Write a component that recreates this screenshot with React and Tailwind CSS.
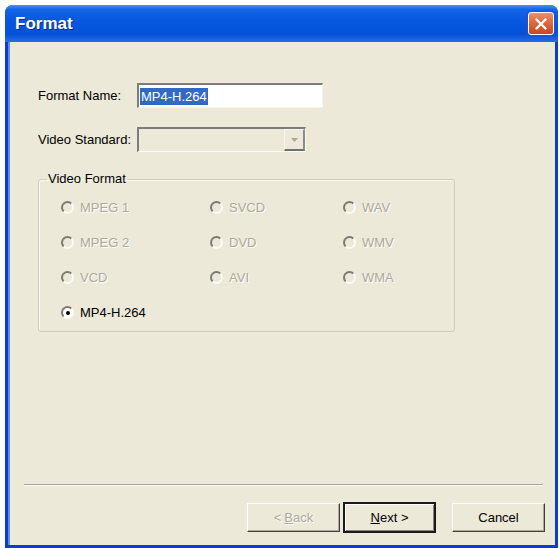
import React from "react";

function Radio({ label, checked = false, disabled = true }) {
  return (
    <div className="flex items-center h-[35px]">
      <span
        className={
          "w-[13px] h-[13px] rounded-full border-2 border-t-[#7c7a70] border-l-[#7c7a70] border-b-[#fbfbf7] border-r-[#fbfbf7] flex items-center justify-center " +
          (disabled ? "bg-[#ECE9D8]" : "bg-white")
        }
      >
        {checked && <span className="w-[4px] h-[4px] rounded-full bg-black" />}
      </span>
      <span
        className={
          "ml-[6px] text-[13px] leading-[16px] " +
          (disabled ? "text-[#aca899] [text-shadow:1px_1px_0_#ffffff]" : "text-black")
        }
      >
        {label}
      </span>
    </div>
  );
}

function CloseButton() {
  return (
    <div className="w-[26px] h-[23px] rounded-[3px] border border-white bg-[linear-gradient(180deg,#e9906c_0%,#dd6a40_45%,#c9461f_100%)] flex items-center justify-center shadow-[0_0_0_1px_#2a4fc0]">
      <svg width="14" height="14" viewBox="0 0 14 14">
        <line x1="2.5" y1="2.5" x2="11.5" y2="11.5" stroke="#ffffff" strokeWidth="2.4" strokeLinecap="round" />
        <line x1="11.5" y1="2.5" x2="2.5" y2="11.5" stroke="#ffffff" strokeWidth="2.4" strokeLinecap="round" />
      </svg>
    </div>
  );
}

export default function App() {
  const rows = [
    ["MPEG 1", "SVCD", "WAV"],
    ["MPEG 2", "DVD", "WMV"],
    ["VCD", "AVI", "WMA"],
  ];
  return (
    <div className="w-[559px] h-[548px] bg-white overflow-hidden font-['Liberation_Sans',Arial,sans-serif]">
      <div className="ml-[5px] mt-[5px] w-[553px] h-[543px] flex flex-col rounded-t-[8px] bg-[#0b3ccc] overflow-hidden">
        {/* Title bar */}
        <div className="h-[37px] shrink-0 flex items-center justify-between pl-[10px] pr-[4px] bg-[linear-gradient(180deg,#4a90f5_0%,#1464e6_12%,#0757df_45%,#0552d8_80%,#2a6de0_100%)]">
          <span className="text-white font-bold text-[17px] leading-[20px] [text-shadow:1px_1px_0_#0a2a8a]">
            Format
          </span>
          <CloseButton />
        </div>

        {/* Body */}
        <div className="flex-1 ml-[3px] mr-[3px] mb-[3px] border-l-2 border-l-[#5f8be6] bg-[#ECE9D8] flex flex-col text-[13px] leading-[16px] text-black">
          <div className="pt-[41px] pl-[28px]">
            {/* Format Name */}
            <div className="flex items-center">
              <span className="w-[99px]">Format Name:</span>
              <div className="w-[186px] h-[25px] bg-white border-t-2 border-l-2 border-t-[#7d7d7d] border-l-[#7d7d7d] border-b border-r border-b-[#f4f3ee] border-r-[#f4f3ee] flex items-center pl-[1px]">
                <span className="bg-[#316AC5] text-white px-[1px] leading-[17px]">MP4-H.264</span>
              </div>
            </div>

            {/* Video Standard */}
            <div className="flex items-center mt-[19px]">
              <span className="w-[99px]">Video Standard:</span>
              <div className="w-[169px] h-[25px] bg-[#ECE9D8] border-t-2 border-l-2 border-t-[#7d7d7d] border-l-[#7d7d7d] border-b border-r border-b-[#fbfbf7] border-r-[#fbfbf7] flex items-stretch justify-end">
                <div className="w-[21px] border-t border-l border-t-[#f6f5ef] border-l-[#f6f5ef] border-b-2 border-r-2 border-b-[#707070] border-r-[#8a8a8a] flex items-center justify-center">
                  <svg width="7" height="4" viewBox="0 0 7 4">
                    <polygon points="0,0 7,0 3.5,4" fill="#aca899" />
                  </svg>
                </div>
              </div>
            </div>

            {/* Video Format group */}
            <fieldset className="mt-[19px] w-[417px] border border-[#cfccbc] rounded-[3px] pb-[1px] shadow-[inset_1px_1px_0_#faf9f3]">
              <legend className="ml-[8px] px-[1px] text-black">Video Format</legend>
              <div className="pt-[3px] pl-[22px] grid grid-cols-[149px_133px_1fr]">
                {rows.map((r) =>
                  r.map((label) => <Radio key={label} label={label} />)
                )}
                <Radio label="MP4-H.264" checked disabled={false} />
              </div>
            </fieldset>
          </div>

          {/* Bottom area */}
          <div className="mt-auto">
            <div className="ml-[14px] mr-[12px] border-t border-t-[#aca899] border-b border-b-white" />
            <div className="flex justify-end items-center mt-[16px] mb-[12px] mr-[10px]">
              <div className="w-[93px] h-[29px] flex items-center justify-center border border-t-white border-l-white border-b-[#404040] border-r-[#404040] shadow-[inset_-1px_-1px_0_#aca899] text-[#aca899] [text-shadow:1px_1px_0_#ffffff]">
                &lt; <span className="underline ml-[3px]">B</span>ack
              </div>
              <div className="ml-[3px] w-[93px] h-[31px] flex items-center justify-center border-2 border-[#1a1a1a] shadow-[inset_1px_1px_0_#ffffff,inset_-1px_-1px_0_#8a8a80]">
                <span className="underline">N</span>ext &gt;
              </div>
              <div className="ml-[16px] w-[93px] h-[29px] flex items-center justify-center border border-t-white border-l-white border-b-[#404040] border-r-[#404040] shadow-[inset_-1px_-1px_0_#aca899]">
                Cancel
              </div>
            </div>
          </div>
        </div>
      </div>
    </div>
  );
}
